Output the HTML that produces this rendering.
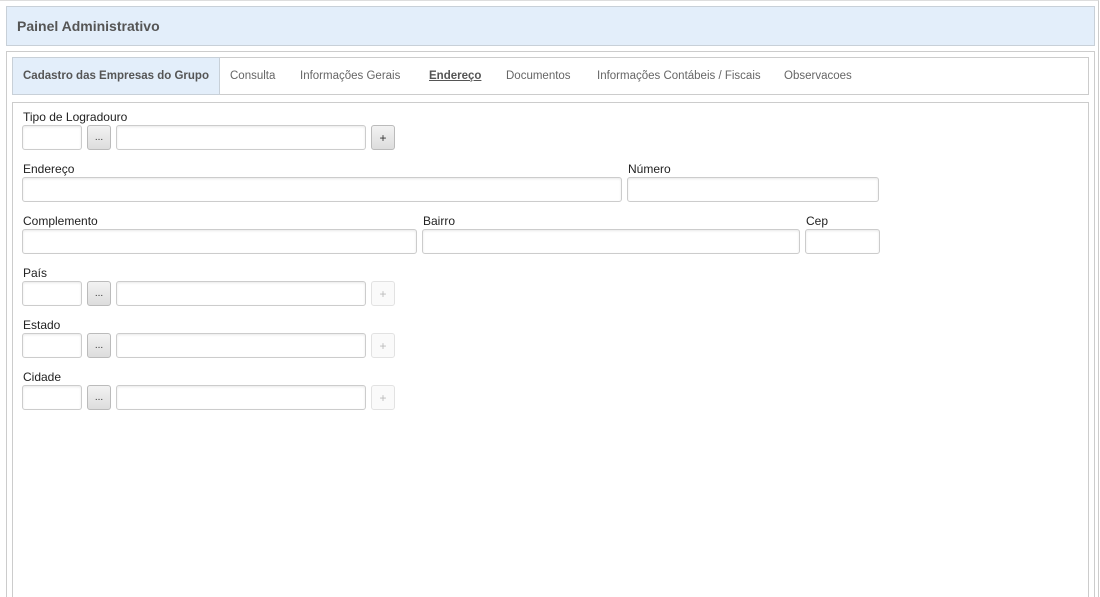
<!DOCTYPE html><html><head><style>
*{box-sizing:border-box;margin:0;padding:0}
html,body{width:1100px;height:597px;overflow:hidden}
body{background:#fff;font-family:"Liberation Sans",sans-serif;font-size:12px;color:#333;position:relative}
.a{position:absolute}
.hdr{left:6px;top:6px;width:1089px;height:40px;background:#e3eefa;border:1px solid #c8d0d8;font-weight:bold;font-size:14px;color:#555;padding:11px 0 0 10px}
.pan{left:6px;top:51px;width:1089px;height:560px;border:1px solid #ccc}
.tabs{left:12px;top:57px;width:1077px;height:38px;border:1px solid #ccc}
.t1{left:12px;top:57px;width:208px;height:38px;background:#e3eefa;border:1px solid #c8d0d8;font-weight:bold;font-size:11.5px;color:#555;padding:12px 0 0 10px}
.tab{top:70px;color:#666;font-size:11.5px}
.cont{left:12px;top:102px;width:1077px;height:520px;border:1px solid #ccc}
.l{color:#222;font-size:12px}
.i{height:25px;border:1px solid #ccc;border-radius:3px;background:#fff;box-shadow:inset 0 1px 2px #e8e8e8}
.b{height:25px;width:24px;border:1px solid #bbb;border-radius:3px;background:linear-gradient(#f2f2f2,#ddd);font-size:10px;text-align:center;line-height:24px;color:#333}
.d{border-color:#e2e2e2;background:#fafafa;color:#bbb}
</style></head><body>
<div class="a" style="left:0;top:0;width:1099px;height:597px;border-top:1px solid #ddd;border-right:1px solid #ccc"></div>
<div class="a hdr">Painel Administrativo</div>
<div class="a pan"></div>
<div class="a tabs"></div>
<div class="a t1">Cadastro das Empresas do Grupo</div>
<div class="a tab" style="left:230px">Consulta</div>
<div class="a tab" style="left:300px">Informações Gerais</div>
<div class="a tab" style="left:429px;font-weight:bold;text-decoration:underline;color:#555">Endereço</div>
<div class="a tab" style="left:506px">Documentos</div>
<div class="a tab" style="left:597px">Informações Contábeis / Fiscais</div>
<div class="a tab" style="left:784px">Observacoes</div>
<div class="a cont"></div>

<div class="a l" style="left:23px;top:110px">Tipo de Logradouro</div>
<div class="a i" style="left:22px;top:125px;width:60px"></div>
<div class="a b" style="left:87px;top:125px">...</div>
<div class="a i" style="left:116px;top:125px;width:250px"></div>
<div class="a b" style="left:371px;top:125px;font-size:12px">+</div>

<div class="a l" style="left:23px;top:162px">Endereço</div>
<div class="a i" style="left:22px;top:177px;width:600px"></div>
<div class="a l" style="left:628px;top:162px">Número</div>
<div class="a i" style="left:627px;top:177px;width:252px"></div>

<div class="a l" style="left:23px;top:214px">Complemento</div>
<div class="a i" style="left:22px;top:229px;width:395px"></div>
<div class="a l" style="left:423px;top:214px">Bairro</div>
<div class="a i" style="left:422px;top:229px;width:378px"></div>
<div class="a l" style="left:806px;top:214px">Cep</div>
<div class="a i" style="left:805px;top:229px;width:75px"></div>

<div class="a l" style="left:23px;top:266px">País</div>
<div class="a i" style="left:22px;top:281px;width:60px"></div>
<div class="a b" style="left:87px;top:281px">...</div>
<div class="a i" style="left:116px;top:281px;width:250px"></div>
<div class="a b d" style="left:371px;top:281px;font-size:12px">+</div>

<div class="a l" style="left:23px;top:318px">Estado</div>
<div class="a i" style="left:22px;top:333px;width:60px"></div>
<div class="a b" style="left:87px;top:333px">...</div>
<div class="a i" style="left:116px;top:333px;width:250px"></div>
<div class="a b d" style="left:371px;top:333px;font-size:12px">+</div>

<div class="a l" style="left:23px;top:370px">Cidade</div>
<div class="a i" style="left:22px;top:385px;width:60px"></div>
<div class="a b" style="left:87px;top:385px">...</div>
<div class="a i" style="left:116px;top:385px;width:250px"></div>
<div class="a b d" style="left:371px;top:385px;font-size:12px">+</div>
</body></html>
